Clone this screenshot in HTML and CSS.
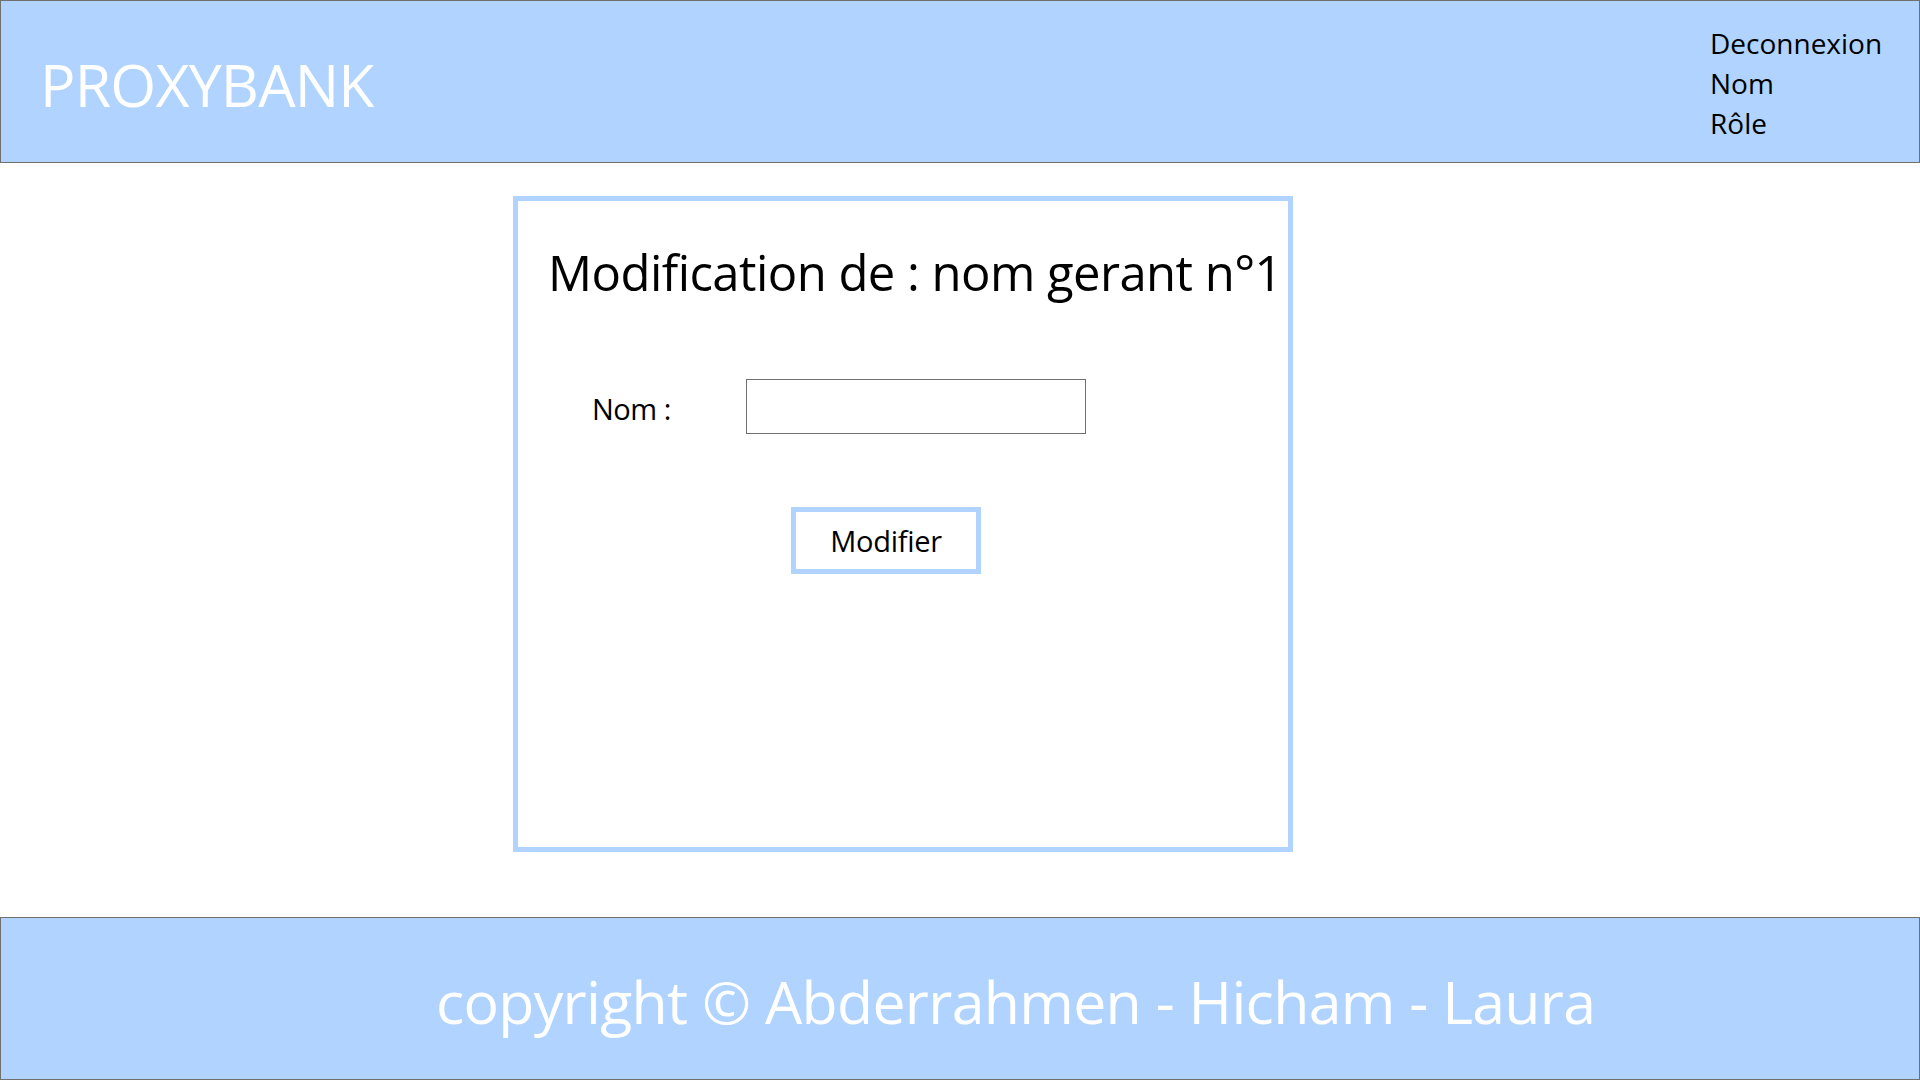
FILE: index.html
```html
<!DOCTYPE html>
<html lang="fr">
<head>
<meta charset="utf-8">
<title>ProxyBank - Modification</title>
<link rel="stylesheet" href="styles.css">
</head>
<body>
<header class="topbar">
  <div class="brand">PROXYBANK</div>
  <nav class="usermenu">
    <a class="usermenu-item" href="#">Deconnexion</a>
    <span class="usermenu-item">Nom</span>
    <span class="usermenu-item">Rôle</span>
  </nav>
</header>
<main class="content">
  <section class="card">
    <h1 class="card-title">Modification de : nom gerant n°1</h1>
    <form class="form">
      <div class="form-row">
        <label class="form-label" for="nom">Nom :</label>
        <input class="form-input" id="nom" type="text">
      </div>
      <button class="btn" type="button">Modifier</button>
    </form>
  </section>
</main>
<footer class="footer">
  <p class="footer-text">copyright © Abderrahmen - Hicham - Laura</p>
</footer>
</body>
</html>
```
FILE: styles.css
```css
* { box-sizing: border-box; }
html, body { margin: 0; padding: 0; }
body {
  width: 1920px;
  height: 1080px;
  display: flex;
  flex-direction: column;
  font-family: "Open Sans", "Noto Sans", sans-serif;
  background: #ffffff;
  color: #000;
  overflow: hidden;
}
.topbar {
  flex: 0 0 163px;
  border: 1px solid #707070;
  background: #b0d3ff;
  display: flex;
  justify-content: space-between;
  align-items: center;
}
.brand {
  color: #ffffff;
  font-size: 59px;
  line-height: 59px;
  padding-left: 39px;
  padding-top: 5px;
  letter-spacing: -0.8px;
}
.usermenu {
  display: flex;
  flex-direction: column;
  padding-right: 28px;
  padding-top: 3px;
  width: 209px;
}
.usermenu-item {
  font-size: 28px;
  line-height: 40px;
  color: #000;
  text-decoration: none;
  letter-spacing: 0;
  white-space: nowrap;
}
.content {
  flex: 1 1 auto;
  padding-top: 33px;
  padding-left: 513px;
}
.card {
  width: 780px;
  height: 656px;
  border: 5px solid #b0d3ff;
  padding: 47px 0 0 30px;
}
.card-title {
  margin: 0;
  font-weight: 400;
  font-size: 49px;
  line-height: 49px;
  white-space: nowrap;
  letter-spacing: -0.55px;
}
.form { display: flex; flex-direction: column; align-items: flex-start; }
.form-row {
  display: flex;
  align-items: center;
  margin-top: 82px;
  margin-left: 44px;
}
.form-label {
  width: 154px;
  font-size: 29px;
  line-height: 29px;
  padding-top: 3px;
  letter-spacing: -0.5px;
}
.form-input {
  width: 340px;
  height: 55px;
  border: 1px solid #707070;
  background: #fff;
  margin: 0;
  padding: 0 8px;
  font-family: inherit;
  font-size: 24px;
  outline: none;
}
.btn {
  margin-top: 73px;
  margin-left: 243px;
  width: 190px;
  height: 67px;
  border: 5px solid #b0d3ff;
  background: #fff;
  font-family: inherit;
  font-size: 29px;
  line-height: 29px;
  color: #000;
  letter-spacing: -0.3px;
  padding: 0;
  cursor: pointer;
}
.footer {
  flex: 0 0 163px;
  border: 1px solid #707070;
  background: #b0d3ff;
  display: flex;
  align-items: center;
}
.footer-text {
  margin: 0;
  padding-left: 435px;
  padding-top: 6px;
  color: #fff;
  font-size: 59px;
  line-height: 59px;
  white-space: nowrap;
  letter-spacing: -0.7px;
}
```
